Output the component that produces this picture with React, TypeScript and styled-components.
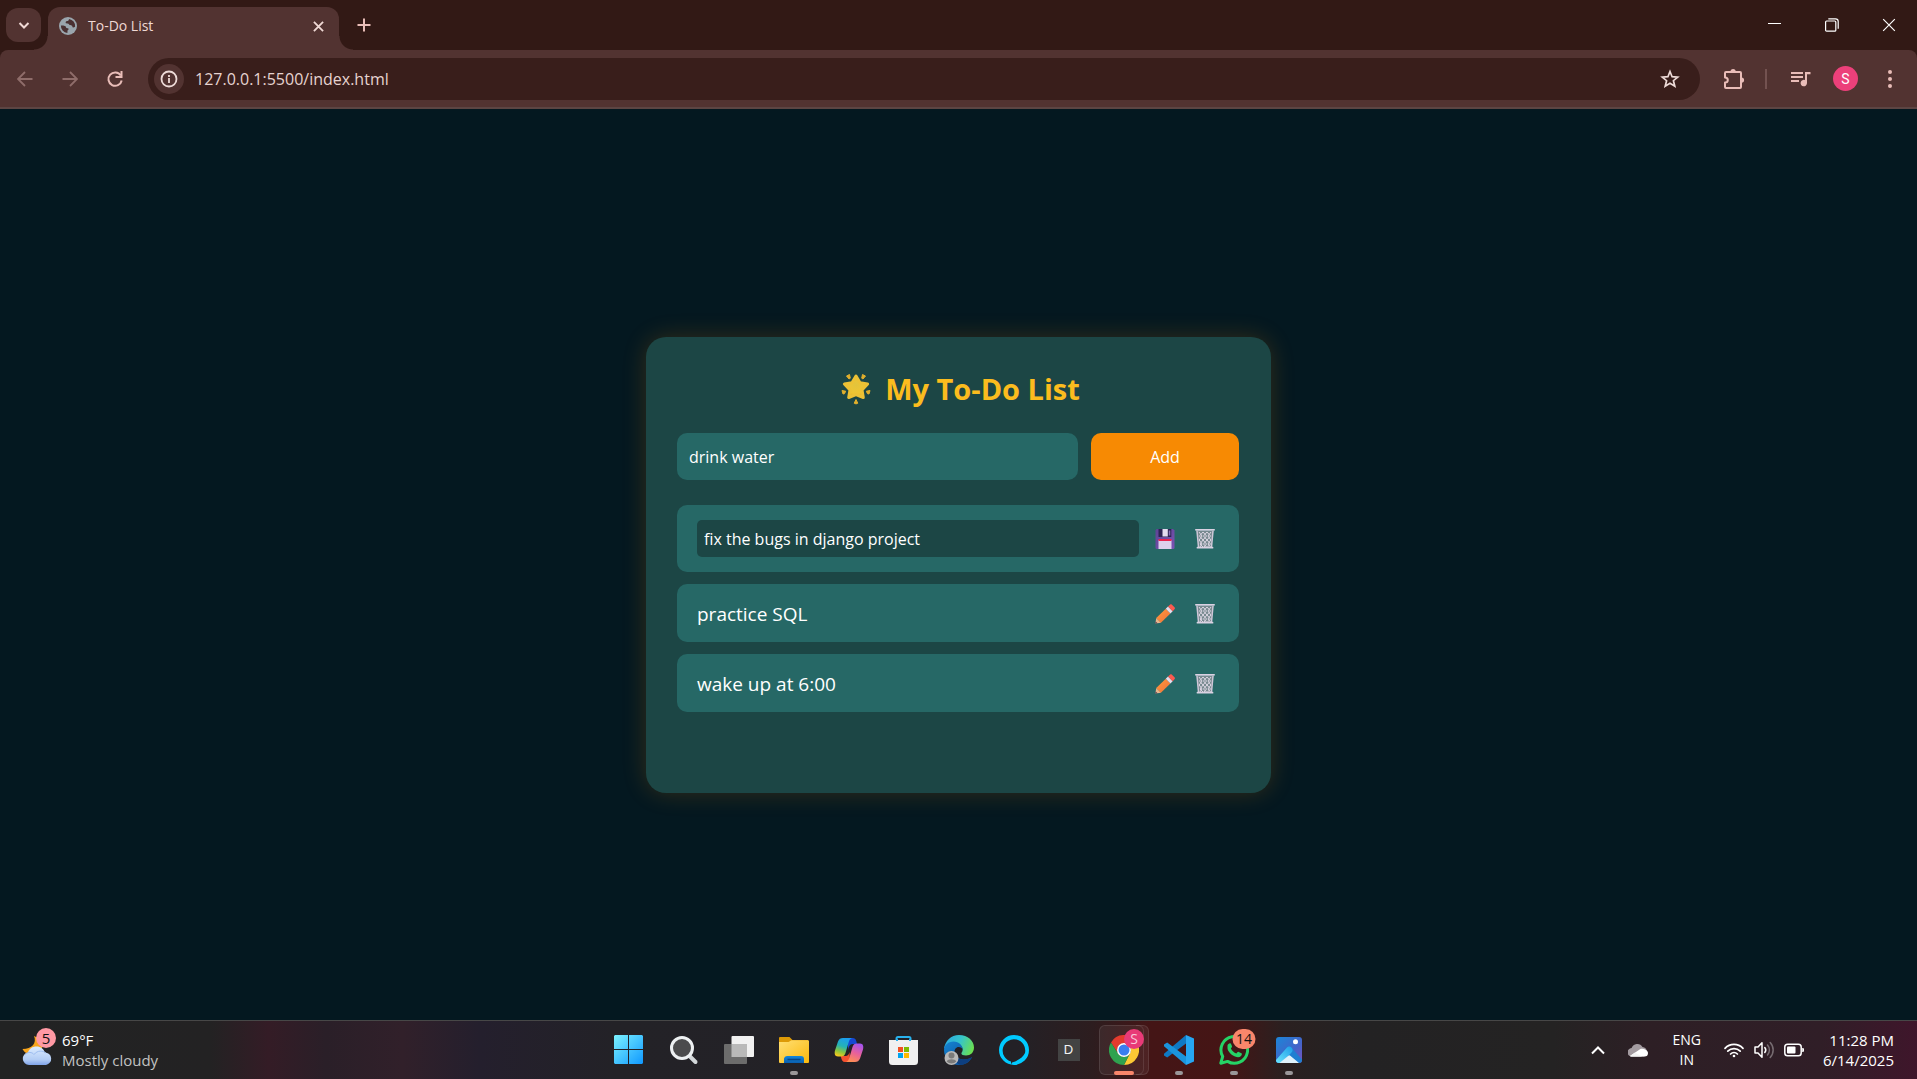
import React, { useState } from "react";
import styled, { createGlobalStyle, css } from "styled-components";

const GlobalStyle = createGlobalStyle`
  *, *::before, *::after { box-sizing: border-box; }
  body {
    margin: 0;
    background: #041820;
    font-family: "Open Sans", "Noto Sans", sans-serif;
  }
  button, input { font-family: inherit; }
  svg { display: block; flex: none; }
`;

const Screen = styled.div`
  min-height: 100vh;
  display: flex;
  flex-direction: column;
`;

/* ---------- Browser frame ---------- */

const plainButton = css`
  display: flex;
  align-items: center;
  justify-content: center;
  flex: none;
  padding: 0;
  border: 0;
  background: none;
  color: inherit;
  cursor: pointer;
`;

const TabStrip = styled.header`
  display: flex;
  height: 50px;
  padding-left: 6px;
  background: #321915;
  color: #f0d9d5;
`;

const TabSearch = styled.button`
  ${plainButton}
  width: 35px;
  height: 34px;
  margin: 8px 7px 0 0;
  border-radius: 12px;
  background: #523331;
`;

const Tab = styled.div`
  position: relative;
  display: flex;
  align-items: center;
  gap: 11px;
  width: 291px;
  height: 43px;
  margin-top: 7px;
  padding: 0 11px 5px;
  border-radius: 12px 12px 0 0;
  background: #523331;

  &::before,
  &::after {
    content: "";
    position: absolute;
    bottom: 0;
    width: 14px;
    height: 14px;
  }
  &::before {
    right: 100%;
    background: radial-gradient(circle at 0 0, transparent 13px, #523331 14px);
  }
  &::after {
    left: 100%;
    background: radial-gradient(circle at 100% 0, transparent 13px, #523331 14px);
  }
`;

const TabTitle = styled.span`
  flex: 1;
  font-size: 14px;
  line-height: 20px;
`;

const IconButton = styled.button<{ $w?: number; $color?: string }>`
  ${plainButton}
  width: ${(p) => p.$w ?? 24}px;
  height: 24px;
  color: ${(p) => p.$color ?? "inherit"};
`;

const NewTab = styled.button`
  ${plainButton}
  width: 30px;
  height: 30px;
  margin: 10px 0 0 10px;
  color: #e9bdb8;
`;

const WindowControls = styled.div`
  display: flex;
  margin-left: auto;
  color: #fff;
`;

const WindowButton = styled.button`
  ${plainButton}
  width: 57px;
  height: 49px;
`;

const ToolbarBack = styled.div`
  background: #321915;
`;

const Toolbar = styled.nav`
  display: flex;
  align-items: center;
  height: 59px;
  padding: 0 15px 0 13px;
  border-bottom: 2px solid #5c4543;
  border-radius: 8px 8px 0 0;
  background: #523331;
  color: #e9bdb8;
`;

const NavButtons = styled.div`
  display: flex;
  gap: 21px;
  margin-right: 21px;
`;

const AddressBar = styled.div`
  display: flex;
  flex: 1;
  align-items: center;
  height: 42px;
  padding: 0 18px 0 6px;
  border-radius: 21px;
  background: #391e1b;
  color: #eedbd8;
`;

const SiteInfo = styled.button`
  ${plainButton}
  width: 30px;
  height: 30px;
  margin-right: 11px;
  border-radius: 50%;
  background: #523331;
`;

const AddressInput = styled.input`
  flex: 1;
  min-width: 0;
  padding: 0;
  border: 0;
  outline: 0;
  background: none;
  color: #e6d3d0;
  font-size: 16px;
  line-height: 24px;
`;

const ToolbarEnd = styled.div`
  display: flex;
  align-items: center;
  margin-left: 22px;
`;

const Separator = styled.span`
  width: 2px;
  height: 20px;
  margin: 0 22px 0 19px;
  background: #735250;
`;

const Avatar = styled.button`
  ${plainButton}
  width: 25px;
  height: 25px;
  margin: 0 20px;
  border-radius: 50%;
  background: #ec407a;
  color: #fff;
  font-family: Roboto, sans-serif;
  font-size: 14px;
`;

/* ---------- To-do page ---------- */

const Page = styled.main`
  flex: 1;
  display: flex;
  align-items: center;
  justify-content: center;
  background: #041820;
`;

const Card = styled.section`
  width: 625px;
  max-width: 100%;
  padding: 31px 32px 31px 31px;
  border-radius: 20px;
  background: #1c4645;
  box-shadow: 0 0 25px rgba(247, 138, 3, 0.2);
  color: #fff;
`;

const Heading = styled.h1`
  display: flex;
  align-items: center;
  justify-content: center;
  gap: 9px;
  margin: 0 0 23px;
  color: #fbbc1e;
  font-size: 29px;
  font-weight: 700;
  line-height: 42px;
`;

const AddForm = styled.form`
  display: flex;
  gap: 13px;
  margin-bottom: 25px;
`;

const textField = css`
  flex: 1;
  min-width: 0;
  border: 0;
  outline: 0;
  color: #fff;
  font-size: 16px;
`;

const NewTask = styled.input`
  ${textField}
  height: 47px;
  padding: 1px 12px 0;
  border-radius: 10px;
  background: #266866;
`;

const AddButton = styled.button`
  ${plainButton}
  width: 148px;
  height: 47px;
  padding-top: 2px;
  border-radius: 10px;
  background: #f78a03;
  color: #fff;
  font-size: 16px;
`;

const List = styled.ul`
  display: flex;
  flex-direction: column;
  gap: 12px;
  min-height: 257px;
  margin: 0;
  padding: 0;
  list-style: none;
`;

const Item = styled.li`
  display: flex;
  align-items: center;
  padding: 15px 20px;
  border-radius: 10px;
  background: #266866;
`;

const ItemText = styled.span`
  flex: 1;
  padding-top: 2px;
  font-size: 19px;
  line-height: 26px;
`;

const ItemEdit = styled.input`
  ${textField}
  height: 37px;
  padding: 1px 7px 0;
  border-radius: 5px;
  background: #1c4645;
`;

const ItemActions = styled.div`
  display: flex;
  gap: 12px;
  margin-left: 12px;
  padding-top: 2px;
`;

const ItemButton = styled.button`
  ${plainButton}
  width: 28px;
  height: 26px;
`;

/* ---------- Taskbar ---------- */

const Taskbar = styled.footer`
  display: grid;
  grid-template-columns: 1fr auto 1fr;
  align-items: center;
  height: 59px;
  border-top: 1px solid #474747;
  background: linear-gradient(
    90deg,
    #222323 0,
    #232223 11%,
    #341c26 14%,
    #2a1f28 17%,
    #31202a 21%,
    #241f2d 25%,
    #232227 32%,
    #232126 53%,
    #2d1d1f 57%,
    #441516 60%,
    #451515 64%,
    #2a2020 67%,
    #232223 71%,
    #242323 81%,
    #2d1f25 86%,
    #301e27 95%,
    #3f162b 100%
  );
  color: #fff;
  font-size: 15px;
  line-height: 20px;
`;

const Weather = styled.button`
  ${plainButton}
  position: relative;
  justify-self: start;
  gap: 9px;
  margin-left: 22px;
  padding-bottom: 1px;
  font-size: 15px;
  line-height: 20px;
  text-align: left;
`;

const Lines = styled.span<{ $align?: string }>`
  display: flex;
  flex-direction: column;
  align-items: ${(p) => p.$align ?? "flex-start"};
`;

const Muted = styled.span`
  color: #c2c2c2;
`;

const WeatherBadge = styled.span`
  position: absolute;
  top: -2px;
  left: 14px;
  width: 20px;
  height: 20px;
  border-radius: 50%;
  background: #ff99a4;
  color: #111;
  font-size: 15px;
  line-height: 20px;
  text-align: center;
`;

const Apps = styled.div`
  display: flex;
`;

const AppButton = styled.button<{ $state?: "open" | "active" }>`
  ${plainButton}
  position: relative;
  width: 55px;
  height: 58px;

  ${(p) =>
    p.$state &&
    css`
      &::after {
        content: "";
        position: absolute;
        bottom: 4px;
        left: 50%;
        width: ${p.$state === "active" ? 20 : 8}px;
        height: 4px;
        border-radius: 2px;
        background: ${p.$state === "active" ? "#f9866b" : "#9a9799"};
        transform: translateX(-50%);
      }
    `}
`;

const ActiveTile = styled.span`
  position: relative;
  display: flex;
  align-items: center;
  justify-content: center;
  width: 50px;
  height: 50px;
  border: 1px solid rgba(255, 255, 255, 0.1);
  border-radius: 6px;
  background: rgba(255, 255, 255, 0.06);

  &::after {
    content: "";
    position: absolute;
    top: -1px;
    right: 4px;
    width: 8px;
    height: 50px;
    border: 1px solid rgba(255, 255, 255, 0.1);
    border-left: 0;
    border-radius: 0 6px 6px 0;
  }
`;

const AppBadge = styled.span<{ $bg: string; $color: string; $w: number }>`
  position: absolute;
  z-index: 1;
  top: 8px;
  left: 38px;
  width: ${(p) => p.$w}px;
  height: 20px;
  border-radius: 10px;
  background: ${(p) => p.$bg};
  color: ${(p) => p.$color};
  font-size: 14px;
  line-height: 20px;
  transform: translateX(-50%);
`;

const LetterTile = styled.span`
  width: 22px;
  height: 22px;
  background: #434343;
  color: #f2f2f2;
  font-family: "Liberation Sans", sans-serif;
  font-size: 13px;
  line-height: 22px;
  text-align: center;
`;

const Tray = styled.div`
  display: flex;
  align-items: center;
  justify-self: end;
  padding-right: 23px;
`;

const TrayButton = styled.button<{ $gap: number }>`
  ${plainButton}
  gap: 10px;
  margin-left: ${(p) => p.$gap}px;
  font-size: 14px;
  line-height: 20px;
`;

const Clock = styled(TrayButton)`
  padding-bottom: 1px;
  font-size: 15px;
`;

/* ---------- Drawings ---------- */

const line = {
  fill: "none",
  stroke: "currentColor",
  strokeWidth: 2,
} as const;

const Globe = () => (
  <svg width="18" height="18" viewBox="0 0 18 18">
    <circle cx="9" cy="9" r="9" fill="#9aa5ad" />
    <path
      d="M1.900 8.500c2.200-.2 3.600.1 4.300.6.900.6.400 1.500 1.300 1.800 1.100.300 2.200.200 2.200 1.200 0 .8-1.100.9-1.200 1.600l-.1 2.400A7.200 7.200 0 0 1 1.900 8.500ZM10 1.900c-.1 1.500-.8 1.900-2 2.200-1 .3-1.500.9-1.300 1.600.2.900 1.200.6 2 .7 1.100.1 1.200 1 1.900 1.600.8.600 1.900 0 2.500.8.400.600.100 1.300.8 1.600.700.200 1.400-.3 2.200-.7A7.200 7.200 0 0 0 10 1.900Z"
      fill="#4a3032"
    />
  </svg>
);

const Chevron = ({ up = false }: { up?: boolean }) => (
  <svg width="16" height="16" viewBox="0 0 16 16" {...line}>
    <path d={up ? "m2 11.500 6-6 6 6" : "m3.500 6 4.500 4.500L12.500 6"} />
  </svg>
);

const Cross = ({ size, width }: { size: number; width: number }) => (
  <svg width={size} height={size} viewBox="0 0 12 12" {...line} strokeWidth={width}>
    <path d="m1 1 10 10M11 1 1 11" />
  </svg>
);

const Plus = () => (
  <svg width="14" height="14" viewBox="0 0 14 14" {...line}>
    <path d="M7 .5v13M.5 7h13" />
  </svg>
);

const Minimize = () => (
  <svg width="13" height="13" viewBox="0 0 13 13" {...line} strokeWidth={1}>
    <path d="M0 5.500h13" />
  </svg>
);

const Restore = () => (
  <svg width="14" height="14" viewBox="0 0 14 14" {...line} strokeWidth={1.2}>
    <rect x=".6" y="3" width="10.200" height="10.200" rx="1" />
    <path d="M3.300.800h7.200a2.700 2.700 0 0 1 2.700 2.700v7.200" />
  </svg>
);

const Arrow = ({ flip = false }: { flip?: boolean }) => (
  <svg width="16" height="16" viewBox="0 0 16 16" {...line} strokeWidth={1.8}>
    <path d={flip ? "M.5 8h14M8 1l7 7-7 7" : "M15.500 8h-14M8 1 1 8l7 7"} />
  </svg>
);

const Reload = () => (
  <svg width="18" height="18" viewBox="0 0 18 18" {...line}>
    <path d="M14.800 5.500A6.700 6.700 0 1 0 15.700 10.500" />
    <path d="M15.500 1v6H9.500" />
  </svg>
);

const Info = () => (
  <svg width="18" height="18" viewBox="0 0 18 18" {...line}>
    <circle cx="9" cy="9" r="7.500" strokeWidth="1.800" />
    <path d="M9 8v5M9 5v2" strokeWidth="1.800" />
  </svg>
);

const Star = () => (
  <svg width="20" height="20" viewBox="0 0 20 20" {...line} strokeWidth={1.7}>
    <path d="m10 2.500 2.100 5.200 5.600.4-4.300 3.600 1.400 5.500-4.800-3-4.800 3 1.400-5.500-4.300-3.600 5.600-.4Z" />
  </svg>
);

const Puzzle = () => (
  <svg width="22" height="22" viewBox="0 0 22 22" {...line}>
    <path
      d="M3 4h14a1 1 0 0 1 1 1v14a1 1 0 0 1-1 1H3a1 1 0 0 1-1-1v-4.500c1.800 0 2.800-1 2.800-2.500S3.800 9.500 2 9.500V5a1 1 0 0 1 1-1Z"
      strokeLinejoin="round"
    />
    <path d="M7.500 3.500a2.600 2.600 0 0 1 5.200 0ZM18.500 9.500a2.600 2.600 0 0 1 0 5.200Z" fill="currentColor" stroke="none" />
  </svg>
);

const QueueMusic = () => (
  <svg width="20" height="16" viewBox="0 0 20 16">
    <path d="M0 1h12v2H0ZM0 5h12v2H0ZM0 9h8v2H0Z" fill="currentColor" />
    <path d="M14 1h5.500v2.200H16V12a3.200 3.200 0 1 1-2-2.900Z" fill="currentColor" />
  </svg>
);

const Dots = () => (
  <svg width="6" height="20" viewBox="0 0 6 20" fill="currentColor">
    <circle cx="3" cy="3" r="2" />
    <circle cx="3" cy="10" r="2" />
    <circle cx="3" cy="17" r="2" />
  </svg>
);

const GlowingStar = () => (
  <svg width="40" height="32" viewBox="0 0 40 32">
    <defs>
      <radialGradient id="starFill" cx=".5" cy=".4" r=".6">
        <stop offset="0" stopColor="#e3c33c" />
        <stop offset=".7" stopColor="#efc532" />
        <stop offset="1" stopColor="#e0aa22" />
      </radialGradient>
    </defs>
    <path
      d="M20 3 24 9.800l7.600 1.200-5.600 6 1.300 7.500-7.300-3-7.300 3L14 17l-5.600-6L16 9.800Z"
      fill="url(#starFill)"
      stroke="#ecc135"
      strokeWidth="3"
      strokeLinejoin="round"
    />
    <g fill="#e2b02c" stroke="#e2b02c" strokeLinejoin="round">
      <path d="m10.500 3 3-1.500.8 3.700-1.300.8ZM29.500 3l-3-1.500-.8 3.700 1.300.8Z" />
      <path d="m6 17.500 3.700.7-1.200 2.500-1.500.3ZM34 17.500l-3.700.7 1.200 2.500 1.500.3Z" />
      <path d="m20 26.500-1.800 3.700 1.800.7 1.800-.7Z" />
    </g>
  </svg>
);

const Floppy = () => (
  <svg width="20" height="20" viewBox="0 0 20 20">
    <defs>
      <linearGradient id="floppyBody" x1="0" y1="0" x2="1" y2="1">
        <stop offset="0" stopColor="#5d4494" />
        <stop offset="1" stopColor="#7b53b4" />
      </linearGradient>
    </defs>
    <path d="M1.500 0H18l1.500 1.500v17A1.500 1.500 0 0 1 18 20H2a1.500 1.500 0 0 1-1.500-1.500V1.500Z" fill="url(#floppyBody)" />
    <path d="M3.500 0h12.800v8H3.500Z" fill="#2c2353" />
    <path d="M7.500 0h5.300v7.500H7.500Z" fill="#e3dcf0" />
    <path d="M13.800 1.500h1.500v5h-1.500Z" fill="#8571b5" />
    <path d="M3.500 11h13v9h-13Z" fill="#ddd0ec" />
    <path d="M3.500 10h13v2h-13Z" fill="#e9234e" />
  </svg>
);

const Pencil = () => (
  <svg width="20" height="20" viewBox="0 0 20 20">
    <defs>
      <linearGradient id="pencilBody" x1="0" y1="0" x2="1" y2="1">
        <stop offset="0" stopColor="#ff9b3d" />
        <stop offset="1" stopColor="#f0703a" />
      </linearGradient>
    </defs>
    <path d="m.3 19.600 1-5.600 4.800 4.700Z" fill="#e8b48c" />
    <path d="m1.200 14 9.600-9.200 4.600 4.600-9.500 9.300Z" fill="url(#pencilBody)" />
    <path d="m10.800 4.800 2.200-2.200 4.700 4.600-2.300 2.200Z" fill="#e6dcec" />
    <path d="M13 2.600 15 .7c.6-.6 1.300-.6 1.900 0l2.600 2.600c.6.600.6 1.300 0 1.900l-1.800 2Z" fill="#fb5a50" />
    <path d="m.3 19.600.4-2.200 1.800 1.800Z" fill="#4b3550" />
  </svg>
);

const Trash = () => (
  <svg width="20" height="20" viewBox="0 0 20 20" fill="none">
    <path d="m2 2 1.500 16h13L18 2Z" fill="#77898f" />
    <path
      d="m4 3 3 4-2.800 4L7 15l-2 3M8 3l-3.500 4L8 11l-3 4 3 3M8 3l3.500 4L8 11l3.500 4L9 18M12 3 8.500 7l3.500 4-3.500 4 3 3M12 3l3.500 4-3.500 4 3.500 4-3 3M16 3l-3 4 2.800 4L13 15l2.500 3"
      stroke="#dcd6e3"
      strokeWidth="1"
    />
    <path d="m2 2 1.500 16M18 2l-1.500 16" stroke="#cfc7d8" strokeWidth="1.500" />
    <path d="M1 .8h18M2.500 18.700h15" stroke="#d9d1e2" strokeWidth="1.800" strokeLinecap="round" />
  </svg>
);

const WeatherArt = () => (
  <svg width="31" height="32" viewBox="0 0 31 32">
    <defs>
      <linearGradient id="cloudFill" x1="0" y1="0" x2="0" y2="1">
        <stop offset="0" stopColor="#dcecff" />
        <stop offset=".7" stopColor="#b3cdf5" />
        <stop offset="1" stopColor="#7fa3e8" />
      </linearGradient>
    </defs>
    <path d="M12 2c3 7-2 13-11.500 13C4 22 16 24 20 14c1.500-5-2-10-8-12Z" fill="#f7a51c" />
    <path
      d="M7 31a6.300 6.300 0 0 1-1-12.500C7 14.600 10.500 12.500 14.500 12.500c4.300 0 7.300 2.500 8.300 6A6.300 6.300 0 0 1 24 31Z"
      fill="url(#cloudFill)"
    />
    <path d="M3 20.500c3-3 7-2.500 9 0 3.500-4.500 9-4 12-1.500" fill="none" stroke="#9dbdf0" strokeWidth="1" />
  </svg>
);

const WindowsLogo = () => (
  <svg width="30" height="30" viewBox="0 0 30 30">
    <defs>
      <linearGradient id="winFill" x1="0" y1="0" x2="30" y2="30" gradientUnits="userSpaceOnUse">
        <stop offset="0" stopColor="#7cf3ff" />
        <stop offset="1" stopColor="#0c95ff" />
      </linearGradient>
    </defs>
    <path d="M1 0h13v14H0V1ZM15 0h13l1 1v13H15ZM0 15h14v14H1l-1-1ZM15 15h14v13l-1 1H15Z" fill="url(#winFill)" />
  </svg>
);

const SearchArt = () => (
  <svg width="30" height="30" viewBox="0 0 30 30">
    <path d="m19.500 20 7 7" stroke="#d3d7da" strokeWidth="4" strokeLinecap="round" />
    <circle cx="13" cy="13" r="10.500" fill="#4b4b4d" stroke="#edf0f2" strokeWidth="3" />
  </svg>
);

const TaskView = () => (
  <svg width="30" height="30" viewBox="0 0 30 30">
    <rect x="7.500" y="1" width="22.500" height="21" rx="1" fill="#f1f1f1" />
    <rect x="0" y="9" width="23" height="20" rx="1" fill="#6c6c6c" />
    <rect x="7.500" y="9" width="15.500" height="13" fill="#b9b9b9" />
  </svg>
);

const Folder = () => (
  <svg width="30" height="30" viewBox="0 0 30 30">
    <defs>
      <linearGradient id="folderFill" x1="0" y1="0" x2="1" y2="1">
        <stop offset="0" stopColor="#ffdf74" />
        <stop offset="1" stopColor="#fbb90c" />
      </linearGradient>
      <linearGradient id="folderTray" x1="0" y1="0" x2="0" y2="1">
        <stop offset="0" stopColor="#1286db" />
        <stop offset="1" stopColor="#0a5fae" />
      </linearGradient>
    </defs>
    <path d="M1 2h9.500l3 3H29v8H0V3a1 1 0 0 1 1-1Z" fill="#dd9a07" />
    <path d="M0 7h9.500l3-1.800H29a1 1 0 0 1 1 1V27a1 1 0 0 1-1 1H1a1 1 0 0 1-1-1Z" fill="url(#folderFill)" />
    <path d="M5 28v-4.500A3 3 0 0 1 8 21h14a3 3 0 0 1 3 3v4Z" fill="url(#folderTray)" />
    <path d="M8.500 24.500h13" stroke="#064687" strokeWidth="1.500" />
  </svg>
);

const Copilot = () => (
  <svg width="30" height="28" viewBox="0 0 30 28">
    <defs>
      <linearGradient id="copLeft" x1=".6" y1="0" x2=".3" y2="1">
        <stop offset="0" stopColor="#1b9df0" />
        <stop offset=".45" stopColor="#25b3b5" />
        <stop offset=".75" stopColor="#8cc63c" />
        <stop offset="1" stopColor="#f5c81e" />
      </linearGradient>
      <linearGradient id="copRight" x1=".7" y1="0" x2=".3" y2="1">
        <stop offset="0" stopColor="#a653ee" />
        <stop offset=".5" stopColor="#e8619a" />
        <stop offset="1" stopColor="#ff8f52" />
      </linearGradient>
    </defs>
    <path d="M14 2h5c2.500 0 3.300 2 4 6h-4c-2.500 0-3.500 1.500-4.500 4L14 14Z" fill="#1648d2" />
    <path d="M16 26h-5c-2.500 0-3.500-2-4.200-6h4.500c2.500 0 3.500-1.500 4.200-4Z" fill="#f4502f" />
    <path d="M9 2h9c-2 .7-2.700 2-3.500 4.700L11.500 17c-.8 2.500-2 3.500-4.500 3.500H4C.8 20.500.2 17.500 1 14.500L4 5.500C5 3 6.500 2 9 2Z" fill="url(#copLeft)" />
    <path d="M21 26h-9c2-.7 2.700-2 3.500-4.700L18.500 11c.8-2.500 2-3.500 4.500-3.500h3c3.200 0 3.800 3 3 6l-3 9c-1 2.500-2.500 3.500-5 3.500Z" fill="url(#copRight)" />
  </svg>
);

const Store = () => (
  <svg width="30" height="30" viewBox="0 0 30 30">
    <path d="M7.500 7V3.500A1.500 1.500 0 0 1 9 2h11a1.500 1.500 0 0 1 1.500 1.500V7" fill="none" stroke="#29b2ee" strokeWidth="2" />
    <path d="M0 5h29v21.500a3.500 3.500 0 0 1-3.500 3.500h-22A3.500 3.500 0 0 1 0 26.500Z" fill="#f0f0f0" />
    <path d="M7 4h2v2H7ZM20 4h2v2h-2Z" fill="#29b2ee" />
    <path d="M9 12h5v5H9Z" fill="#f25022" />
    <path d="M15 12h5v5h-5Z" fill="#7fba00" />
    <path d="M9 18h5v5H9Z" fill="#00a4ef" />
    <path d="M15 18h5v5h-5Z" fill="#ffb900" />
  </svg>
);

const Edge = () => (
  <svg width="30" height="30" viewBox="0 0 30 30">
    <defs>
      <linearGradient id="edgeTop" x1="0" y1=".3" x2="1" y2=".6">
        <stop offset="0" stopColor="#2aa9e0" />
        <stop offset=".5" stopColor="#36c4c9" />
        <stop offset="1" stopColor="#6ce04e" />
      </linearGradient>
      <linearGradient id="edgeLow" x1="0" y1="0" x2="1" y2="1">
        <stop offset="0" stopColor="#1585d3" />
        <stop offset="1" stopColor="#0a4a94" />
      </linearGradient>
    </defs>
    <path d="M0 14C1 6 7 0 15 0c9 0 15 6 15 12.500 0 5-3.500 8-8 8-3 0-4.600-1-4.600-2s1.300-1.700 1.300-4c0-3-3-5-6.500-5C6 9.500 1 12 0 14Z" fill="url(#edgeTop)" />
    <path d="M0 15c0-5 4.500-8.500 9.500-8.500 5.500 0 9.200 4 9.200 8-.5-1.500-2-2.500-4-2.500-2.800 0-4.200 2.500-4.200 5 0 5 5 7.500 9.500 7.500 3.500 0 6-1 8-2.500C26 27 21 30 15 30 6.500 30 0 23.500 0 15Z" fill="url(#edgeLow)" />
    <path d="M11 15c-1.500 5 2.500 9.500 9 9.500 3.500 0 6-1 8-2.500-2 4-6 7-11 8-6-1-9.500-9.500-6-15Z" fill="#0d3f80" />
    <circle cx="7.500" cy="23" r="7" fill="#b9b9b9" />
    <circle cx="7.500" cy="20.500" r="3" fill="#7a7a7a" />
    <path d="M2.700 26.500c1-3 8.600-3 9.600 0a7 7 0 0 1-9.600 0Z" fill="#7a7a7a" />
  </svg>
);

const Alexa = () => (
  <svg width="30" height="30" viewBox="0 0 30 30">
    <path
      fillRule="evenodd"
      d="M15 0a15 15 0 1 0 0 30 15 15 0 1 0 0-30ZM12 29.500v-3A11.300 11.300 0 1 1 26 18c-1.800 4-6.500 7.500-13 9.500Z"
      fill="#00caff"
    />
  </svg>
);

const Chrome = () => (
  <svg width="30" height="30" viewBox="0 0 30 30">
    <path d="M2 7.500A15 15 0 0 1 28 7.500L15 8.200A6.800 6.800 0 0 0 9.100 18.400Z" fill="#e33b2e" />
    <path d="M28 7.500A15 15 0 0 1 15 30l5.900-11.600A6.800 6.800 0 0 0 15 8.200Z" fill="#fcc934" />
    <path d="M15 30A15 15 0 0 1 2 7.500l7.100 10.900a6.800 6.800 0 0 0 11.800 0Z" fill="#2fa24f" />
    <circle cx="15" cy="15" r="7" fill="#fff" />
    <circle cx="15" cy="15" r="5.500" fill="#3a7df0" />
  </svg>
);

const VsCode = () => (
  <svg width="30" height="30" viewBox="0 0 30 30">
    <path d="M22 0v8.500L3.200 22.500 0 20.500v-1.800Z" fill="#0f79c4" />
    <path d="M22 30v-8.500L3.200 7.500 0 9.500v1.800Z" fill="#1b94dc" />
    <path d="M22 0 30 3.500v23L22 30Z" fill="#26a6f2" />
  </svg>
);

const WhatsApp = () => (
  <svg width="30" height="30" viewBox="0 0 30 30">
    <path
      d="m1.800 28.200 1.900-6.700A13.300 13.300 0 1 1 8.500 26.400Z"
      fill="none"
      stroke="#25d366"
      strokeWidth="3"
      strokeLinejoin="round"
    />
    <path
      d="M8.500 10.500c.5-1.500 1.700-2.500 2.700-2.200.8.200 1.200 1.500 1.700 2.800.4 1-.3 1.500-1 2.400 1.200 2.500 3 4 5.500 5 .9-.9 1.400-2 2.300-1.600l2.800 1.400c.8.500.2 2-.5 2.800-1.500 1.500-3.500 1.500-6 .5-4-1.500-7.500-5.500-7.500-8.500Z"
      fill="#25d366"
    />
  </svg>
);

const Photos = () => (
  <svg width="26" height="26" viewBox="0 0 26 26">
    <defs>
      <linearGradient id="photoSky" x1="0" y1="0" x2="1" y2="1">
        <stop offset="0" stopColor="#1b86d8" />
        <stop offset=".6" stopColor="#4463c9" />
        <stop offset="1" stopColor="#7a52bd" />
      </linearGradient>
      <linearGradient id="photoHill" x1="0" y1="1" x2="1" y2="0">
        <stop offset="0" stopColor="#6be6ff" />
        <stop offset="1" stopColor="#1d9be6" />
      </linearGradient>
      <clipPath id="photoClip">
        <rect width="26" height="26" rx="3" />
      </clipPath>
    </defs>
    <g clipPath="url(#photoClip)">
      <rect width="26" height="26" fill="url(#photoSky)" />
      <path d="M0 26v-3L11 10.500a3 3 0 0 1 4.400 0L26 22.500V26Z" fill="#1f7fd2" />
      <path d="M0 26v-3L11 10.500a3 3 0 0 1 4.500 0c1.500 1.700 1.500 3.500 0 5L5 26Z" fill="url(#photoHill)" />
      <path d="m3.500 26 8.800-7.200a1.500 1.500 0 0 1 2 0L23 26Z" fill="#dff2fb" />
    </g>
    <circle cx="19.500" cy="4.800" r="2.500" fill="#fff" />
  </svg>
);

const OneDrive = () => (
  <svg width="20" height="14" viewBox="0 0 20 14">
    <path d="M4 13.500A4 4 0 0 1 3.600 5 6 6 0 0 1 14.500 4 5 5 0 0 1 16 13.500Z" fill="#a39ba0" />
    <path d="M4 13.500a4 4 0 0 1-2-.5L12 6.200c2-1.400 8 .3 8 3.800a3.500 3.500 0 0 1-3.500 3.500Z" fill="#fff" />
    <path d="m2 13 5-3.500 7 4H4a4 4 0 0 1-2-.5Z" fill="#f3f3f3" />
  </svg>
);

const Wifi = () => (
  <svg width="20" height="16" viewBox="0 0 20 16" {...line} strokeWidth={1.7} strokeLinecap="round">
    <path d="M1 6.300a12.500 12.500 0 0 1 18 0M3.800 9.200a8.700 8.700 0 0 1 12.400 0M6.600 12a4.900 4.900 0 0 1 6.800 0" />
    <circle cx="10" cy="14" r="1.300" fill="currentColor" stroke="none" />
  </svg>
);

const Speaker = () => (
  <svg width="20" height="18" viewBox="0 0 20 18" {...line} strokeWidth={1.5} strokeLinejoin="round" strokeLinecap="round">
    <path d="M1 6h3l4-4.200v14.400L4 12H1ZM10.800 6.500a4 4 0 0 1 0 5" />
    <path d="M13.500 4a7.500 7.500 0 0 1 0 10M16.200 1.500a11 11 0 0 1 0 15" opacity=".35" />
  </svg>
);

const Battery = () => (
  <svg width="20" height="14" viewBox="0 0 20 14">
    <rect x=".8" y="1.300" width="16.400" height="11.400" rx="2.800" fill="none" stroke="#fff" strokeWidth="1.500" />
    <rect x="3" y="3.500" width="8.500" height="7" rx="1" fill="#fff" />
    <path d="M18.200 5h.6a1.200 1.200 0 0 1 1.200 1.200v1.600A1.200 1.200 0 0 1 18.800 9h-.6Z" fill="#fff" />
  </svg>
);

/* ---------- App ---------- */

type Task = { id: number; text: string; editing: boolean };

const initialTasks: Task[] = [
  { id: 1, text: "fix the bugs in django project", editing: true },
  { id: 2, text: "practice SQL", editing: false },
  { id: 3, text: "wake up at 6:00", editing: false },
];

function TodoCard() {
  const [draft, setDraft] = useState("drink water");
  const [tasks, setTasks] = useState(initialTasks);

  const update = (id: number, change: Partial<Task>) =>
    setTasks((all) => all.map((t) => (t.id === id ? { ...t, ...change } : t)));

  const add = (event: React.FormEvent) => {
    event.preventDefault();
    if (!draft.trim()) return;
    setTasks((all) => [...all, { id: Date.now(), text: draft.trim(), editing: false }]);
    setDraft("");
  };

  return (
    <Card>
      <Heading>
        <GlowingStar />
        My To-Do List
      </Heading>
      <AddForm onSubmit={add}>
        <NewTask aria-label="New task" value={draft} onChange={(e) => setDraft(e.target.value)} />
        <AddButton type="submit">Add</AddButton>
      </AddForm>
      <List>
        {tasks.map((task) => (
          <Item key={task.id}>
            {task.editing ? (
              <ItemEdit
                aria-label="Edit task"
                value={task.text}
                onChange={(e) => update(task.id, { text: e.target.value })}
              />
            ) : (
              <ItemText>{task.text}</ItemText>
            )}
            <ItemActions>
              <ItemButton
                aria-label={task.editing ? "Save" : "Edit"}
                onClick={() => update(task.id, { editing: !task.editing })}
              >
                {task.editing ? <Floppy /> : <Pencil />}
              </ItemButton>
              <ItemButton
                aria-label="Delete"
                onClick={() => setTasks((all) => all.filter((t) => t.id !== task.id))}
              >
                <Trash />
              </ItemButton>
            </ItemActions>
          </Item>
        ))}
      </List>
    </Card>
  );
}

export default function App() {
  return (
    <Screen>
      <GlobalStyle />
      <TabStrip>
        <TabSearch aria-label="Search tabs">
          <Chevron />
        </TabSearch>
        <Tab>
          <Globe />
          <TabTitle>To-Do List</TabTitle>
          <IconButton aria-label="Close tab" $w={20}>
            <Cross size={11} width={2} />
          </IconButton>
        </Tab>
        <NewTab aria-label="New tab">
          <Plus />
        </NewTab>
        <WindowControls>
          <WindowButton aria-label="Minimize">
            <Minimize />
          </WindowButton>
          <WindowButton aria-label="Restore">
            <Restore />
          </WindowButton>
          <WindowButton aria-label="Close">
            <Cross size={14} width={1} />
          </WindowButton>
        </WindowControls>
      </TabStrip>

      <ToolbarBack>
        <Toolbar>
          <NavButtons>
            <IconButton aria-label="Back" $color="#8f6d6a">
              <Arrow />
            </IconButton>
            <IconButton aria-label="Forward" $color="#8f6d6a">
              <Arrow flip />
            </IconButton>
            <IconButton aria-label="Reload">
              <Reload />
            </IconButton>
          </NavButtons>
          <AddressBar>
            <SiteInfo aria-label="Site information">
              <Info />
            </SiteInfo>
            <AddressInput aria-label="Address" defaultValue="127.0.0.1:5500/index.html" />
            <IconButton aria-label="Bookmark">
              <Star />
            </IconButton>
          </AddressBar>
          <ToolbarEnd>
            <IconButton aria-label="Extensions">
              <Puzzle />
            </IconButton>
            <Separator />
            <IconButton aria-label="Media controls">
              <QueueMusic />
            </IconButton>
            <Avatar aria-label="Profile">S</Avatar>
            <IconButton aria-label="Menu">
              <Dots />
            </IconButton>
          </ToolbarEnd>
        </Toolbar>
      </ToolbarBack>

      <Page>
        <TodoCard />
      </Page>

      <Taskbar>
        <Weather>
          <WeatherArt />
          <WeatherBadge>5</WeatherBadge>
          <Lines>
            <span>69°F</span>
            <Muted>Mostly cloudy</Muted>
          </Lines>
        </Weather>
        <Apps>
          <AppButton aria-label="Start"><WindowsLogo /></AppButton>
          <AppButton aria-label="Search"><SearchArt /></AppButton>
          <AppButton aria-label="Task view"><TaskView /></AppButton>
          <AppButton aria-label="File Explorer" $state="open"><Folder /></AppButton>
          <AppButton aria-label="Copilot"><Copilot /></AppButton>
          <AppButton aria-label="Microsoft Store"><Store /></AppButton>
          <AppButton aria-label="Edge"><Edge /></AppButton>
          <AppButton aria-label="Alexa"><Alexa /></AppButton>
          <AppButton aria-label="D"><LetterTile>D</LetterTile></AppButton>
          <AppButton aria-label="Chrome" $state="active">
            <ActiveTile><Chrome /></ActiveTile>
            <AppBadge $bg="#e83a77" $color="#f9c9da" $w={20}>S</AppBadge>
          </AppButton>
          <AppButton aria-label="Visual Studio Code" $state="open"><VsCode /></AppButton>
          <AppButton aria-label="WhatsApp" $state="open">
            <WhatsApp />
            <AppBadge $bg="#f9866b" $color="#111" $w={23}>14</AppBadge>
          </AppButton>
          <AppButton aria-label="Photos" $state="open"><Photos /></AppButton>
        </Apps>
        <Tray>
          <TrayButton $gap={0} aria-label="Hidden icons"><Chevron up /></TrayButton>
          <TrayButton $gap={22} aria-label="OneDrive"><OneDrive /></TrayButton>
          <TrayButton $gap={24}>
            <Lines $align="center">
              <span>ENG</span>
              <span>IN</span>
            </Lines>
          </TrayButton>
          <TrayButton $gap={23} aria-label="Network, volume and battery">
            <Wifi />
            <Speaker />
            <Battery />
          </TrayButton>
          <Clock $gap={19}>
            <Lines $align="flex-end">
              <span>11:28 PM</span>
              <span>6/14/2025</span>
            </Lines>
          </Clock>
        </Tray>
      </Taskbar>
    </Screen>
  );
}
